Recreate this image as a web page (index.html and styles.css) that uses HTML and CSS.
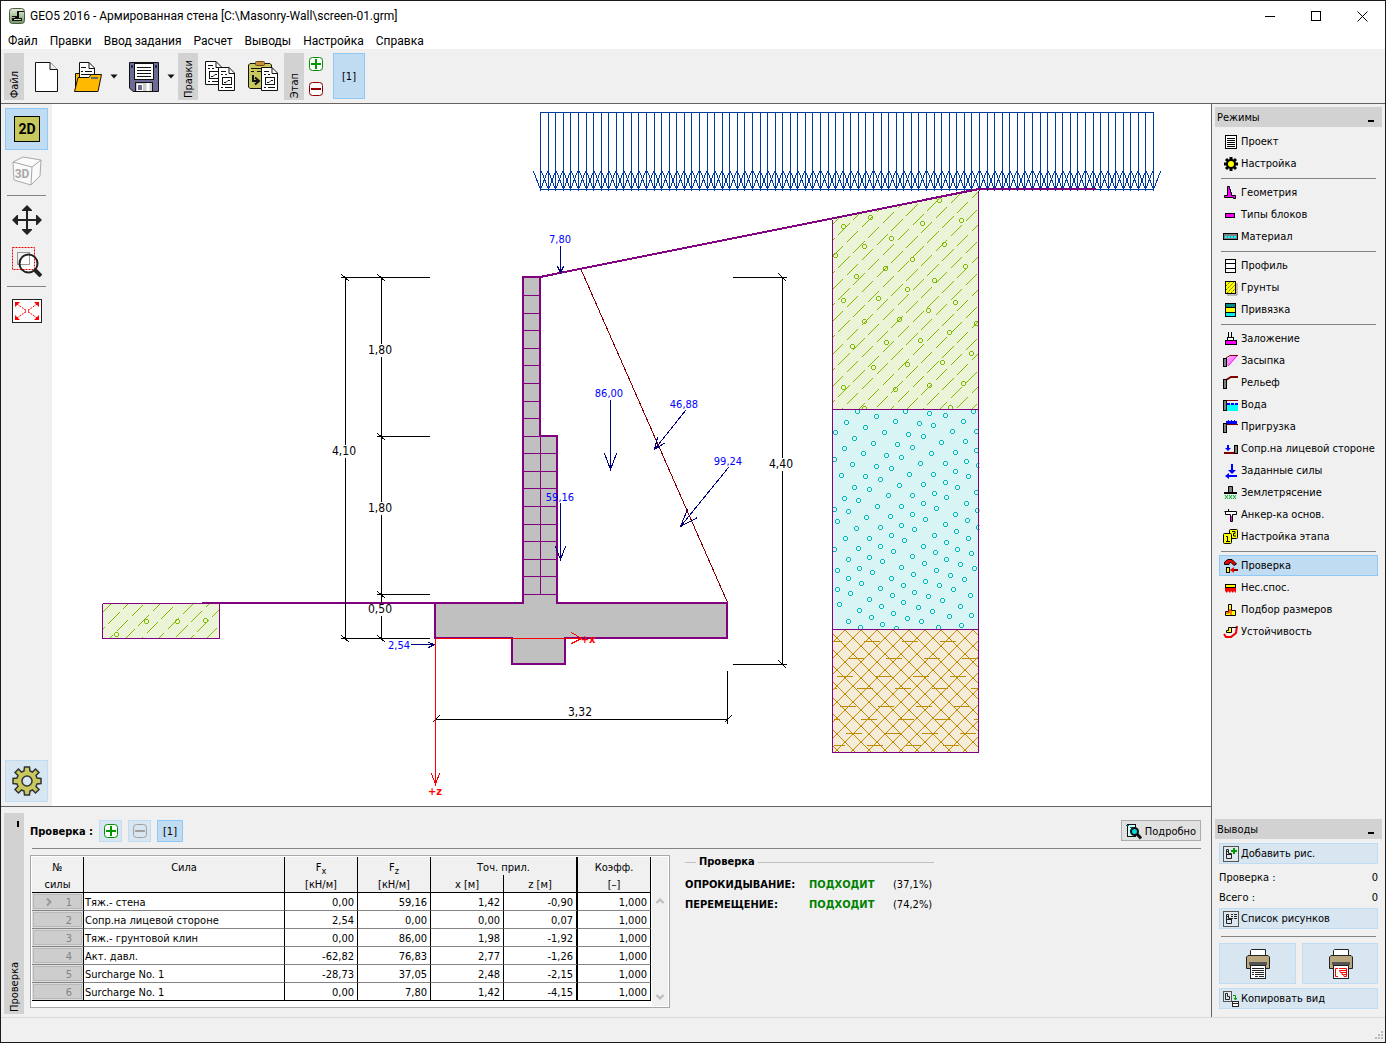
FILE: index.html
```html
<!DOCTYPE html>
<html lang="ru">
<head>
<meta charset="utf-8">
<title>GEO5 2016 - Армированная стена</title>
<link rel="stylesheet" href="styles.css">
</head>
<body>
<header class="titlebar">
  <svg class="app-icon" width="16" height="16" viewBox="0 0 16 16"><defs><linearGradient id="appfill" x1="0" y1="0" x2="0" y2="1"><stop offset="0" stop-color="#e4ecd8"/><stop offset="1" stop-color="#6f9a62"/></linearGradient></defs><rect x="0.5" y="0.5" width="15" height="15" rx="3" fill="url(#appfill)" stroke="#4d5a48"/><path d="M3 10H6V8H8V3H10V10H13V13H3Z" fill="#111"/><path d="M9 3.500H15M3 8.500H6" stroke="#111"/><path d="M5 11.500H12" stroke="#c9d8b8"/></svg>
  <h1 class="title">GEO5 2016 - Армированная стена [C:\Masonry-Wall\screen-01.grm]</h1>
  <div class="window-controls">
    <button class="win-btn" aria-label="Свернуть"><svg width="11" height="11"><path d="M0 5.500H10" stroke="#000"/></svg></button>
    <button class="win-btn" aria-label="Развернуть"><svg width="11" height="11"><rect x="0.5" y="0.5" width="9" height="9" fill="none" stroke="#000"/></svg></button>
    <button class="win-btn" aria-label="Закрыть"><svg width="11" height="11"><path d="M0.500 0.500L10.500 10.500M10.500 0.500L0.500 10.500" stroke="#000"/></svg></button>
  </div>
</header>
<nav class="menubar">
  <a href="#">Файл</a><a href="#">Правки</a><a href="#">Ввод задания</a><a href="#">Расчет</a><a href="#">Выводы</a><a href="#">Настройка</a><a href="#">Справка</a>
</nav>
<div class="toolbar">
  <div class="side-tab"><span>Файл</span></div>
  <button class="tool" aria-label="Новый"><svg width="24" height="30" viewBox="0 0 24 30"><path d="M1 0.500H15L22.500 8V29.500H0.500V0.500Z" fill="#fff" stroke="#111"/><path d="M15 0.500V7.500H22.500" fill="#eee" stroke="#111"/></svg></button>
  <button class="tool open" aria-label="Открыть"><svg width="28" height="30" viewBox="0 0 28 30"><path d="M1.500 28V11.500H8" fill="#ffb900" stroke="#111"/><path d="M5.500 20V0.500H15L20.500 6V20Z" fill="#fff" stroke="#111"/><path d="M15 0.500V6.500H20M7 5.500H12M7 9.500H9M11 9.500H18M7 12.500H18" fill="none" stroke="#111"/><path d="M0.500 29.500L4 15.500H15L17 12.500H27.500L24 29.500Z" fill="#ffb900" stroke="#111"/><path d="M17 16H24" stroke="#6b6b6b" stroke-width="2"/></svg></button>
  <button class="drop" aria-label="Последние файлы"><svg width="8" height="5"><path d="M0.500 0.500H7.500L4 4.500Z" fill="#111"/></svg></button>
  <button class="tool save" aria-label="Сохранить"><svg width="30" height="30" viewBox="0 0 30 30"><path d="M0.500 0.500H29.500V29.500H4L0.500 26Z" fill="#6b6b95" stroke="#111"/><rect x="5.500" y="1.500" width="19" height="16" fill="#fff" stroke="#111"/><path d="M8 5.500H22M8 8.500H22M8 11.500H22M8 14.500H22" stroke="#111"/><path d="M2 4.500H4M26 4.500H28" stroke="#111" stroke-width="2"/><rect x="6.500" y="20.500" width="17" height="9" fill="#ccc" stroke="#111"/><rect x="8.500" y="22.500" width="5" height="6" fill="#6b6b95" stroke="#fff"/><path d="M19 21V29" stroke="#fff" stroke-width="3"/></svg></button>
  <button class="drop" aria-label="Варианты сохранения"><svg width="8" height="5"><path d="M0.500 0.500H7.500L4 4.500Z" fill="#111"/></svg></button>
  <div class="side-tab"><span>Правки</span></div>
  <button class="tool copy" aria-label="Копировать"><svg width="31" height="31" viewBox="0 0 31 31"><defs><g id="sheet"><path d="M0.500 0.500H11L16.500 6V23.500H0.500Z" fill="#fff" stroke="#111"/><path d="M11 0.500V6.500H16M3 4.500H8M3 7.500H5M7 7.500H9M3 20.500H5M7 20.500H14" fill="none" stroke="#111"/><rect x="4.500" y="10.500" width="9" height="7" fill="#fff" stroke="#111"/><path d="M6 15.500H8L10 13.500H12" fill="none" stroke="#111"/></g></defs><use href="#sheet"/><use href="#sheet" x="13" y="6"/></svg></button>
  <button class="tool paste" aria-label="Вставить"><svg width="31" height="31" viewBox="0 0 31 31"><path d="M2 2.500H22L23.500 4V26L22 27.500H2L0.500 26V4Z" fill="#c8c85f" stroke="#111"/><rect x="7.500" y="0.500" width="9" height="4" rx="1" fill="#c98b3c" stroke="#6b4413"/><path d="M3 7.500H20M3 10.500H6M9 10.500H13" stroke="#111"/><path d="M5 14V20H10M7 16.500L11 20L7 23.500" fill="none" stroke="#111" stroke-width="2"/><use href="#sheet" x="13" y="6"/></svg></button>
  <div class="side-tab stage"><span>Этап</span></div>
  <div class="stage-buttons">
    <button class="mini" aria-label="Добавить этап"><svg width="14" height="14"><rect x="0.500" y="0.500" width="13" height="13" rx="3" fill="#fff" stroke="#008c00"/><path d="M2 7H12M7 2V12" stroke="#009600" stroke-width="2"/></svg></button>
    <button class="mini" aria-label="Удалить этап"><svg width="14" height="14"><rect x="0.500" y="0.500" width="13" height="13" rx="3" fill="#fff" stroke="#8c0000"/><path d="M2 7H12" stroke="#960000" stroke-width="2"/></svg></button>
  </div>
  <button class="stage-one">[1]</button>
</div>

<main class="workspace">
  <section class="left-area">
    <div class="view-row">
      <aside class="view-tools">
        <button class="vt active" aria-label="2D"><svg width="26" height="26"><rect x="0.500" y="0.500" width="25" height="25" fill="#c8c85f" stroke="#000"/><text class="t2d" x="13" y="18" text-anchor="middle">2D</text></svg></button>
        <button class="vt" aria-label="3D" disabled><svg width="30" height="30" viewBox="0 0 30 30"><path d="M1 6L11 1L29 4L28 20L19 29L2 24Z" fill="#fafafa" stroke="#a8a8a8"/><path d="M1 6L20 11L29 4M20 11L19 29" fill="none" stroke="#a8a8a8"/><text class="t3d" x="10" y="22" text-anchor="middle">3D</text></svg></button>
        <hr class="vsep">
        <button class="vt" aria-label="Сдвиг"><svg width="30" height="30" viewBox="0 0 30 30"><path d="M15 4V26M4 15H26" stroke="#222" stroke-width="2"/><path d="M15 0L20 5V6H10V5ZM15 30L20 25V24H10V25ZM0 15L5 10H6V20H5ZM30 15L25 10H24V20H25Z" fill="#222"/></svg></button>
        <button class="vt" aria-label="Увеличить область"><svg width="30" height="30" viewBox="0 0 30 30"><circle cx="16.500" cy="16.500" r="9" fill="#fff"/><rect x="5.500" y="5.500" width="12" height="12" fill="none" stroke="#999"/><rect x="0.500" y="0.500" width="22" height="22" fill="none" stroke="#e00" stroke-dasharray="2 1"/><circle cx="16.500" cy="16.500" r="9" fill="none" stroke="#222" stroke-width="2"/><path d="M23 23L29 29" stroke="#222" stroke-width="4"/></svg></button>
        <hr class="vsep">
        <button class="vt" aria-label="Показать всё"><svg width="30" height="24" viewBox="0 0 30 24"><rect x="0.500" y="0.500" width="29" height="23" fill="#fff" stroke="#222"/><path d="M5 5L12 10M25 5L18 10M5 19L12 14M25 19L18 14" stroke="#f00" stroke-dasharray="2 1"/><path d="M3 3H8L3 8ZM27 3H22L27 8ZM3 21H8L3 16ZM27 21H22L27 16Z" fill="#f00"/><path d="M13.500 10V14M16.500 10V14M12 10.500H14M16 10.500H18M12 13.500H14M16 13.500H18" stroke="#f44"/></svg></button>
        <button class="vt soft settings" aria-label="Настройки вида"><svg width="32" height="32" viewBox="-16 -16 32 32"><g fill="#c8c85f" stroke="#333" stroke-width="1.5"><path d="M-3 -10L-2.500 -14H2.500L3 -10L5.500 -9L8.500 -12L12 -8.500L9 -5.500L10 -3L14 -2.500V2.500L10 3L9 5.500L12 8.500L8.500 12L5.500 9L3 10L2.500 14H-2.500L-3 10L-5.500 9L-8.500 12L-12 8.500L-9 5.500L-10 3L-14 2.500V-2.500L-10 -3L-9 -5.500L-12 -8.500L-8.500 -12L-5.500 -9Z"/><circle r="5" fill="#d8e6f2"/></g></svg></button>
      </aside>
      <svg class="drawing" viewBox="52 104 1159 702" role="img" aria-label="Схема армированной стены">
        <defs>
          <marker id="ring-green" markerUnits="userSpaceOnUse" markerWidth="8" markerHeight="8" refX="4" refY="4" orient="0"><circle class="ring crisp" cx="4" cy="4" r="2" stroke="#80b900"/></marker>
          <marker id="ring-cyan" markerUnits="userSpaceOnUse" markerWidth="8" markerHeight="8" refX="4" refY="4" orient="0"><circle class="ring crisp" cx="4" cy="4" r="2" stroke="#00b9b9"/></marker>
          <marker id="load" markerUnits="userSpaceOnUse" markerWidth="20" markerHeight="90" refX="10" refY="80" orient="0"><path class="surcharge crisp" d="M10 2V80M3 62L10 80L17 62"/></marker>
          <clipPath id="soil0"><rect x="102" y="603" width="118" height="35"/></clipPath>
          <clipPath id="soil1"><path d="M832 219L979 190V409H832Z"/></clipPath>
          <clipPath id="soil2"><rect x="832" y="409" width="147" height="220"/></clipPath>
          <clipPath id="soil3"><rect x="832" y="629" width="147" height="123"/></clipPath>
        </defs>
        <g class="crisp">
          <path class="fill-clay" d="M832 219L979 190V409H832ZM102 603H220V638H102Z"/>
          <path class="fill-gravel" d="M832 409H979V629H832Z"/>
          <path class="fill-rock" d="M832 629H979V752H832Z"/>
          <g clip-path="url(#soil1)">
            <path class="hatch" d="M832 225l150 -150M832 257l150 -150M832 290l150 -150M832 322l150 -150M832 355l150 -150M832 387l150 -150M832 419l150 -150M832 452l150 -150M832 484l150 -150M832 517l150 -150M832 549l150 -150"/>
            <path class="hatch shifted" d="M832 241l150 -150M832 274l150 -150M832 306l150 -150M832 338l150 -150M832 371l150 -150M832 403l150 -150M832 436l150 -150M832 468l150 -150M832 500l150 -150M832 533l150 -150"/>
          </g>
          <g clip-path="url(#soil0)">
            <path class="hatch" d="M102 613l150 -150M102 646l150 -150M102 678l150 -150M102 711l150 -150M102 743l150 -150"/>
            <path class="hatch shifted" d="M102 630l150 -150M102 662l150 -150M102 695l150 -150M102 727l150 -150"/>
          </g>
          <g clip-path="url(#soil3)">
            <path class="brown" d="M832 489l147 147M832 505l147 147M832 521l147 147M832 537l147 147M832 553l147 147M832 569l147 147M832 585l147 147M832 601l147 147M832 617l147 147M832 633l147 147M832 649l147 147M832 665l147 147M832 681l147 147M832 697l147 147M832 713l147 147M832 729l147 147M832 745l147 147"/>
            <path class="brown" d="M832 643l147 -147M832 659l147 -147M832 675l147 -147M832 691l147 -147M832 707l147 -147M832 723l147 -147M832 739l147 -147M832 755l147 -147M832 771l147 -147M832 787l147 -147M832 803l147 -147M832 819l147 -147M832 835l147 -147M832 851l147 -147M832 867l147 -147M832 883l147 -147"/>
          </g>
        </g>
        <g transform="translate(.5 .5)">
          <polyline class="dots green" clip-path="url(#soil1)" points="843,226 870,217 939,200 922,223 961,220 891,238 864,246 944,244 835,255 912,259 965,266 885,268 856,276 934,280 907,289 878,298 843,300 955,302 928,310 899,319 864,321 976,323 949,332 920,340 886,342 852,346 971,353 942,362 907,364 873,367 843,387 963,383 929,385 895,389 950,407 864,408"/>
          <polyline class="dots green" points="116,634 146,621 177,621 205,620"/>
          <polyline class="dots cyan" clip-path="url(#soil2)" points="857,411 876,416 905,411 929,413 945,415 973,411 846,422 895,421 919,423 933,425 963,421 865,427 835,432 884,432 908,434 952,431 976,431 923,436 854,438 873,443 897,444 912,447 941,442 965,441 844,448 863,453 886,455 931,453 955,452 976,450 901,457 834,459 852,464 920,463 945,463 966,461 876,466 891,468 841,475 865,476 880,479 909,474 933,474 955,471 968,476 978,465 854,487 869,489 899,485 923,484 945,482 957,487 888,495 912,495 934,493 946,497 976,492 844,498 858,500 834,509 848,511 877,506 901,506 923,503 936,508 966,503 866,517 890,516 912,514 925,519 955,514 977,510 837,521 856,528 880,527 901,525 914,529 945,524 967,520 956,531 845,538 869,538 891,535 904,540 934,535 946,542 968,538 978,527 858,548 880,546 893,551 923,546 935,552 957,549 834,549 971,553 848,559 869,557 882,561 912,556 924,563 946,559 960,564 837,570 859,568 872,572 901,567 913,574 936,570 950,575 974,568 848,578 861,583 891,578 903,585 925,581 939,585 964,579 837,589 850,593 880,588 892,595 914,592 928,596 953,589 970,595 839,604 869,599 881,606 903,602 918,607 942,600 960,606 859,610 871,617 893,613 907,618 932,611 949,616 971,615 848,621 882,624 921,621 961,625 860,627 896,628 938,627"/>
          <g class="crisp">
            <path class="brown" d="M833 641h8M863 641h16M901 641h16M939 641h16M847 658h16M885 658h16M923 658h16M961 658h16M836 676h16M874 676h16M912 676h16M949 676h16M833 688h3M856 688h16M894 688h16M931 688h16M970 688h8M839 706h16M877 706h16M915 706h16M953 706h16M833 719h6M860 719h16M897 719h16M934 719h16M973 719h5M845 733h16M883 733h16M921 733h16M959 733h16M833 745h11M866 745h16M904 745h16M942 745h16"/>
            <path class="purple" d="M832 219V752H978V190M832 409H978M832 629H978M102 603V638H219V603"/>
            <path class="surcharge" d="M540 112H1153M540 189H1153"/>
          </g>
          <polyline class="loads" points="540,189 548,189 555,189 563,189 570,189 578,189 586,189 593,189 601,189 608,189 616,189 623,189 631,189 638,189 646,189 654,189 661,189 669,189 676,189 684,189 691,189 699,189 707,189 714,189 722,189 729,189 737,189 744,189 752,189 760,189 767,189 775,189 782,189 790,189 797,189 805,189 812,189 820,189 828,189 835,189 843,189 850,189 858,189 865,189 873,189 881,189 888,189 896,189 903,189 911,189 918,189 926,189 934,189 941,189 949,189 956,189 964,189 971,189 979,189 987,189 994,189 1002,189 1009,189 1017,189 1024,189 1032,189 1040,189 1047,189 1055,189 1062,189 1070,189 1077,189 1085,189 1093,189 1100,189 1108,189 1115,189 1123,189 1130,189 1138,189 1145,189 1153,189"/>
        </g>
        <g class="crisp">
          <path class="wall" d="M523 277H540V436H557V603H727V638H565V664H512V638H435V603H523Z"/>
          <path class="ground" d="M202 603H435M540 277L979 189L982 188.500H1096"/>
        </g>
        <g class="crisp" transform="translate(.5 .5)">
          <path class="purple" d="M102 603H202M523 295H540M523 313H540M523 330H540M523 348H540M523 365H540M523 383H540M523 401H540M523 418H540M523 436H540M523 453H557M523 471H557M523 488H557M523 506H557M523 524H557M523 541H557M523 559H557M523 576H557M523 594H557M540 436V594"/>
          <path class="slip" d="M581 270L727 602"/>
          <path class="dim" d="M345 277V444M345 457V638M381 277V343M381 356V501M381 514V602M381 615V638M340 277H429M376 436H429M376 594H429M340 638H429M782 277V457M782 470V664M732 277H786M732 664H786M435 719H727M727 670V723M341 274L349 281M377 274L385 281M377 433L385 440M377 591L385 598M341 635L349 642M377 635L385 642M778 273L786 281M778 660L786 668M432 722L439 715M724 722L731 715"/>
          <path class="force" d="M560 245V272M557 266L560 272L563 266M610 399V469M604 453L610 469L616 453M560 502V559M555 546L560 559L565 546M685 410L654 449M657 437L654 449L665 442M728 467L680 526M687 509L680 526L697 517M410 644H434M428 642L434 644L428 647"/>
          <path class="axis" d="M435 638V784M431 773L435 784L439 773M435 638H581M571 632L581 638L571 643"/>
        </g>
        <g class="dim-text">
          <text x="380" y="354">1,80</text><text x="344" y="455">4,10</text><text x="380" y="512">1,80</text><text x="380" y="613">0,50</text><text x="781" y="468">4,40</text><text x="580" y="716">3,32</text>
        </g>
        <g class="force-text">
          <text x="560" y="243">7,80</text><text x="609" y="397">86,00</text><text x="684" y="408">46,88</text><text x="728" y="465">99,24</text><text x="560" y="501">59,16</text><text x="399" y="649">2,54</text>
        </g>
        <g class="axis-text"><text x="588" y="643">+x</text><text x="435" y="795">+z</text></g>
      </svg>
    </div>

    <section class="results">
      <div class="side-tab tall"><i class="pin"></i><span>Проверка</span></div>
      <div class="results-main">
        <div class="results-head">
          <strong>Проверка :</strong>
          <button class="soft-btn sq" aria-label="Добавить"><svg width="14" height="14"><rect x="0.500" y="0.500" width="13" height="13" rx="3" fill="#fff" stroke="#008c00"/><path d="M2 7H12M7 2V12" stroke="#009600" stroke-width="2"/></svg></button>
          <button class="soft-btn sq" aria-label="Удалить" disabled><svg width="14" height="14"><rect x="0.500" y="0.500" width="13" height="13" rx="3" fill="none" stroke="#a0a0a0"/><path d="M2 7H12" stroke="#a0a0a0" stroke-width="2"/></svg></button>
          <button class="soft-btn on">[1]</button>
          <button class="details"><svg width="16" height="16" viewBox="0 0 16 16"><rect x="1.500" y="0.500" width="8" height="12" fill="#cff" stroke="#111"/><path d="M0 1.500H3M4 3.500H8M4 6.500H8" stroke="#066"/><circle cx="8.500" cy="7.500" r="3.500" fill="#0dd" stroke="#111" stroke-width="2"/><path d="M11 10L15 14.500" stroke="#111" stroke-width="3"/></svg>Подробно</button>
        </div>
        <div class="results-body">
          <div class="grid-frame">
            <table class="forces">
              <colgroup><col class="c-no"><col class="c-name"><col class="c-num"><col class="c-num"><col class="c-num"><col class="c-z"><col class="c-num"></colgroup>
              <thead>
                <tr><th>№</th><th>Сила</th><th>F<sub>x</sub></th><th>F<sub>z</sub></th><th colspan="2" class="thick">Точ. прил.</th><th>Коэфф.</th></tr>
                <tr><th>силы</th><th></th><th>[кН/м]</th><th>[кН/м]</th><th>x [м]</th><th class="thick">z [м]</th><th>[–]</th></tr>
              </thead>
              <tbody>
                <tr><th><svg class="cur" width="6" height="8"><path d="M1 0.500L4.500 4L1 7.500" fill="none" stroke="#999" stroke-width="2"/></svg>1</th><td>Тяж.- стена</td><td>0,00</td><td>59,16</td><td>1,42</td><td class="thick">-0,90</td><td>1,000</td></tr>
                <tr><th>2</th><td>Сопр.на лицевой стороне</td><td>2,54</td><td>0,00</td><td>0,00</td><td class="thick">0,07</td><td>1,000</td></tr>
                <tr><th>3</th><td>Тяж.- грунтовой клин</td><td>0,00</td><td>86,00</td><td>1,98</td><td class="thick">-1,92</td><td>1,000</td></tr>
                <tr><th>4</th><td>Акт. давл.</td><td>-62,82</td><td>76,83</td><td>2,77</td><td class="thick">-1,26</td><td>1,000</td></tr>
                <tr><th>5</th><td>Surcharge No. 1</td><td>-28,73</td><td>37,05</td><td>2,48</td><td class="thick">-2,15</td><td>1,000</td></tr>
                <tr><th>6</th><td>Surcharge No. 1</td><td>0,00</td><td>7,80</td><td>1,42</td><td class="thick">-4,15</td><td>1,000</td></tr>
              </tbody>
            </table>
            <div class="scroll"><svg width="8" height="6"><path d="M0.500 5L4 1.500L7.500 5" fill="none" stroke="#bbb" stroke-width="2"/></svg><svg width="8" height="6"><path d="M0.500 1L4 4.500L7.500 1" fill="none" stroke="#bbb" stroke-width="2"/></svg></div>
          </div>
          <section class="verdict">
            <h2><span>Проверка</span></h2>
            <dl>
              <dt>ОПРОКИДЫВАНИЕ:</dt><dd class="ok">ПОДХОДИТ</dd><dd>(37,1%)</dd>
              <dt>ПЕРЕМЕЩЕНИЕ:</dt><dd class="ok">ПОДХОДИТ</dd><dd>(74,2%)</dd>
            </dl>
          </section>
        </div>
      </div>
    </section>
  </section>

  <aside class="modes">
    <div class="panel-head">Режимы<i></i></div>
    <nav class="mode-list">
      <button class="mode"><svg viewBox="0 0 16 16"><rect x="2.500" y="1.500" width="11" height="13" fill="#fff" stroke="#000"/><path d="M4 4.500H12M4 6.500H12M4 8.500H12M4 10.500H12M4 12.500H12" stroke="#000"/></svg>Проект</button>
      <button class="mode"><svg viewBox="-8 -8 16 16"><path d="M0 -7V7M-7 0H7M-5 -5L5 5M5 -5L-5 5" stroke="#000" stroke-width="3"/><circle r="4" fill="#ff0" stroke="#000" stroke-width="2"/></svg>Настройка</button>
      <hr>
      <button class="mode"><svg viewBox="0 0 16 16"><path d="M1.500 10.500H4.500V1.500H6.500V4.500H7.500V7.500H8.500V10.500H12.500V13.500H10.500V12.500H1.500Z" fill="#f0f" stroke="#000"/></svg>Геометрия</button>
      <button class="mode"><svg viewBox="0 0 16 16"><rect x="2.500" y="6.500" width="9" height="4" fill="#f0f" stroke="#000"/></svg>Типы блоков</button>
      <button class="mode"><svg viewBox="0 0 16 16"><rect x="0.500" y="4.500" width="14" height="6" fill="#808080" stroke="#000"/><path d="M2 8H13" stroke="#0ff" stroke-width="2" stroke-dasharray="2 1"/></svg>Материал</button>
      <hr>
      <button class="mode"><svg viewBox="0 0 16 16"><rect x="2.500" y="1.500" width="10" height="13" fill="#fff" stroke="#000"/><path d="M2 5.500H13M2 10.500H13" stroke="#000"/></svg>Профиль</button>
      <button class="mode"><svg viewBox="0 0 16 16"><path d="M4 15H14V3" fill="none" stroke="#888"/><rect x="2.500" y="1.500" width="10" height="12" fill="#ff0" stroke="#000"/><path d="M3 6L7 2M3 10L11 2M4 13L12 5M8 13L12 9" stroke="#660" stroke-dasharray="2 1"/></svg>Грунты</button>
      <button class="mode"><svg viewBox="0 0 16 16"><rect x="2.500" y="1.500" width="10" height="4" fill="#088" stroke="#000"/><rect x="2.500" y="5.500" width="10" height="5" fill="#ff0" stroke="#000"/><rect x="2.500" y="10.500" width="10" height="4" fill="#0ee" stroke="#000"/></svg>Привязка</button>
      <hr>
      <button class="mode"><svg viewBox="0 0 16 16"><path d="M5.500 1V6M8.500 1V6" stroke="#000"/><rect x="4.500" y="6.500" width="6" height="3" fill="#fff" stroke="#000"/><rect x="2.500" y="9.500" width="11" height="4" fill="#f0f" stroke="#000"/></svg>Заложение</button>
      <button class="mode"><svg viewBox="0 0 16 16"><path d="M4 13V6L9 2H15L5 13Z" fill="#f8f"/><path d="M3 5L7 2.500H15" fill="none" stroke="#800000"/><path d="M14 3L5 13" stroke="#f0f"/><rect x="0.500" y="5.500" width="3" height="8" fill="#808080" stroke="#000"/></svg>Засыпка</button>
      <button class="mode"><svg viewBox="0 0 16 16"><path d="M3 5L8 2H15" fill="none" stroke="#800000" stroke-width="2"/><rect x="0.500" y="4.500" width="3" height="9" fill="#808080" stroke="#000"/></svg>Рельеф</button>
      <button class="mode"><svg viewBox="0 0 16 16"><path d="M4 3.500H15" stroke="#800000"/><rect x="4" y="7" width="11" height="7" fill="#0ff"/><path d="M4 7H15" stroke="#00f" stroke-width="2" stroke-dasharray="3 1"/><rect x="0.500" y="3.500" width="3" height="10" fill="#808080" stroke="#000"/></svg>Вода</button>
      <button class="mode"><svg viewBox="0 0 16 16"><path d="M3 2H5V1H6V2H8V1H9V2H11V1H12V2H14V5H3Z" fill="#00f"/><path d="M4 5.500H15" stroke="#800000"/><rect x="0.500" y="4.500" width="3" height="9" fill="#808080" stroke="#000"/></svg>Пригрузка</button>
      <button class="mode"><svg viewBox="0 0 16 16"><path d="M5 4V8" stroke="#00f" stroke-width="2"/><path d="M2 7H8L5 10Z" fill="#00f"/><path d="M1 12H11" stroke="#800000" stroke-width="2"/><rect x="11.500" y="4.500" width="3" height="8" fill="#808080" stroke="#000"/></svg>Сопр.на лицевой стороне</button>
      <button class="mode"><svg viewBox="0 0 16 16"><path d="M9 1V10M4 13H14" stroke="#00f" stroke-width="2"/><path d="M5 7H13L9 11ZM2 13L6 10V16Z" fill="#00f"/></svg>Заданные силы</button>
      <button class="mode"><svg viewBox="0 0 16 16"><path d="M5.500 1.500H9.500V7.500H5.500Z" fill="#808080" stroke="#000"/><path d="M1 8H14" stroke="#000" stroke-width="2"/><path d="M2 10L5 14M5 10L2 14M6 10L9 14M9 10L6 14M10 10L13 14M13 10L10 14" stroke="#00b428"/></svg>Землетрясение</button>
      <button class="mode"><svg viewBox="0 0 16 16"><path d="M1.500 4.500H5.500V2M5.500 4.500H13.500V7.500H9.500V14.500H7.500V7.500H2.500V4.500" fill="#fff" stroke="#000"/><path d="M8.500 9V14" stroke="#f0f"/></svg>Анкер-ка основ.</button>
      <button class="mode"><svg viewBox="0 0 16 16"><rect x="6.500" y="0.500" width="8" height="9" rx="1" fill="#ff0" stroke="#000"/><rect x="0.500" y="4.500" width="8" height="10" rx="1" fill="#ff0" stroke="#000"/><path d="M3 7.500H4.500V12M3 12.500H7M9 2.500H12V4.500H10.500V7H13" fill="none" stroke="#000"/></svg>Настройка этапа</button>
      <hr>
      <button class="mode selected"><svg viewBox="0 0 16 16"><path d="M1.500 6.500V4L5 1.500H9L13.500 6L11 7.500L8 4.500H6.500L6 6.500Z" fill="#e00" stroke="#000"/><rect x="3.500" y="9.500" width="3" height="5" fill="#ff0" stroke="#000"/><path d="M8 12H15" stroke="#800000" stroke-width="2"/><path d="M7 12L11 9V15Z" fill="#e00"/></svg>Проверка</button>
      <button class="mode"><svg viewBox="0 0 16 16"><rect x="2.500" y="4.500" width="10" height="3" fill="#ff0" stroke="#000"/><path d="M2 8H13V13L11 11L10 13L8 11L7 13L5 11L4 13L2 11Z" fill="#f00"/></svg>Нес.спос.</button>
      <button class="mode"><svg viewBox="0 0 16 16"><path d="M5.500 2.500H8.500V8.500H12.500V13.500H2.500V9.500H5.500Z" fill="#ff0" stroke="#000"/><path d="M3 11H6V8H8V13" fill="none" stroke="#f00"/></svg>Подбор размеров</button>
      <button class="mode"><svg viewBox="0 0 16 16"><path d="M14 2L13 9L8 13H3L1 10" fill="none" stroke="#e00" stroke-width="2"/><path d="M5.500 3.500H8.500V8.500H3.500V6.500H5.500ZM9 3.500H14" fill="#ff0" stroke="#000"/></svg>Устойчивость</button>
    </nav>
    <div class="panel-head outputs-head">Выводы<i></i></div>
    <div class="outputs">
      <button class="out"><svg viewBox="0 0 16 16"><rect x="0.500" y="0.500" width="15" height="15" fill="#dfe8ef" stroke="#555"/><path d="M3.500 3.500H5.500V7.500H8.500V12.500H3.500ZM4 8.500H8M4 5.500H5" fill="none" stroke="#222"/><path d="M11 2V8M8 5H14" stroke="#009600" stroke-width="2"/></svg>Добавить рис.</button>
      <div class="stats">
        <p class="stat"><span>Проверка :</span><span>0</span></p>
        <p class="stat"><span>Всего :</span><span>0</span></p>
      </div>
      <button class="out"><svg viewBox="0 0 16 16"><rect x="0.500" y="0.500" width="15" height="15" fill="#dfe8ef" stroke="#555"/><path d="M3.500 3.500H5.500V7.500H8.500V12.500H3.500ZM4 8.500H8M4 5.500H5" fill="none" stroke="#222"/><path d="M8 3.500H10M11 3.500H14M8 5.500H10M11 5.500H14M8 7.500H10M11 7.500H14" stroke="#222"/></svg>Список рисунков</button>
      <hr>
      <div class="printers">
        <button class="print" aria-label="Печать протокола"><svg width="26" height="30" viewBox="0 0 26 30"><path d="M5.500 8V1.500L6.500 0.500H20.500V8" fill="#fff" stroke="#222"/><path d="M3 6.500H23L24.500 8V19.500H1.500V8Z" fill="#b9a67c" stroke="#222"/><rect x="4" y="13" width="18" height="3" fill="#555"/><rect x="5.500" y="16.500" width="15" height="13" fill="#fff" stroke="#222"/><path d="M7 19.500H19M7 21.500H19M7 23.500H9M10 23.500H19M7 25.500H9M10 25.500H19M10 27.500H13M14 27.500H19" stroke="#222"/></svg></button>
        <button class="print" aria-label="Печать рисунка"><svg width="26" height="30" viewBox="0 0 26 30"><path d="M5.500 8V1.500L6.500 0.500H20.500V8" fill="#fff" stroke="#222"/><path d="M3 6.500H23L24.500 8V19.500H1.500V8Z" fill="#b9a67c" stroke="#222"/><rect x="4" y="13" width="18" height="3" fill="#555"/><rect x="5.500" y="16.500" width="15" height="13" fill="#fff" stroke="#222"/><path d="M10 19.500H7.500V27.500H10M11 19.500H18.500V27.500H16L15.500 25.500H14V23.500H12.500L11.500 21.500H18M13 23.500H18M16 25.500H18" fill="none" stroke="#f00"/></svg></button>
      </div>
      <button class="out"><svg viewBox="0 0 16 16"><rect x="0.500" y="0.500" width="8" height="10" fill="#dfe8ef" stroke="#555"/><path d="M2.500 2.500H4.500V5.500H6.500V8.500H2.500Z" fill="none" stroke="#222"/><path d="M10 4.500H12.500V8M11 7L12.500 9L14 7" fill="none" stroke="#009600"/><rect x="9.500" y="10.500" width="6" height="5" fill="#fff" stroke="#222"/><path d="M9 12.500H16" stroke="#222"/></svg>Копировать вид</button>
    </div>
  </aside>
</main>
<footer class="statusbar"><svg width="10" height="10"><path d="M7 1H9M4 4H6M7 4H9M1 7H3M4 7H6M7 7H9" stroke="#bbb" stroke-width="2"/></svg></footer>
</body>
</html>
```
FILE: styles.css
```css
* { box-sizing: border-box; }
html { height: 100%; }
body {
  margin: 0;
  min-height: 100%;
  display: flex;
  flex-direction: column;
  border: 1px solid #1a1a1a;
  background: #f0f0f0;
  color: #000;
  font: 11px/14px "DejaVu Sans Condensed", "Noto Sans", sans-serif;
}
button { font: inherit; color: inherit; padding: 0; margin: 0; border: 0; background: none; display: flex; align-items: center; justify-content: center; }
svg { display: block; flex: none; }
hr { border: 0; height: 1px; background: #848484; margin: 0; }
p, h1, h2, dl, dd { margin: 0; }

.titlebar { display: flex; align-items: center; height: 30px; padding-left: 8px; background: #fff; }
.title { flex: 1; margin-left: 5px; font: 12px/16px Roboto, sans-serif; }
.window-controls { display: flex; }
.win-btn { width: 46px; height: 30px; }
.menubar { display: flex; gap: 12px; height: 18px; padding-left: 7px; background: #fff; font: 12px/20px Roboto, sans-serif; }
.menubar a { color: #000; text-decoration: none; }

.toolbar { display: flex; align-items: flex-start; height: 55px; padding: 4px 3px 0; border-bottom: 1px solid #646464; }
.side-tab { display: flex; align-items: flex-end; justify-content: center; width: 20px; height: 47px; padding: 0 0 2px 1px; background: #d2d2d2; }
.side-tab span { writing-mode: vertical-rl; transform: rotate(180deg); line-height: 16px; }
.tool { height: 47px; margin-left: 11px; }
.open { margin-left: 15px; }
.drop { width: 19px; height: 47px; padding-right: 3px; justify-content: flex-end; }
.save { margin-left: 8px; }
.copy { margin-left: 7px; }
.paste { margin-left: 12px; }
.stage { margin-left: 5px; }
.stage-buttons { display: flex; flex-direction: column; gap: 11px; padding: 4px 0 0 5px; }
.stage-one { width: 32px; height: 46px; margin-left: 10px; padding-top: 2px; border: 1px solid #90c8f6; background: #c0dcf3; }

.workspace { flex: 1; display: flex; }
.left-area { flex: 1; min-width: 0; display: flex; flex-direction: column; border-right: 1px solid #646464; }
.view-row { flex: 1; display: flex; min-height: 0; }
.view-tools { width: 51px; padding: 4px; display: flex; flex-direction: column; }
.vt { width: 43px; height: 42px; border: 1px solid transparent; }
.active { border-color: #90c8f6; background: #c0dcf3; }
.soft { border-color: #c0dcf3; background: #d8e6f2; }
.settings { margin-top: auto; }
.vsep { margin: 3px 2px; }
.t2d { font: bold 14px Roboto, sans-serif; }
.t3d { font: bold 12px Roboto, sans-serif; fill: #a8a8a8; }

.drawing { flex: 1; min-width: 0; background: #fff; }
.crisp { shape-rendering: crispEdges; }
.fill-clay { fill: #ecf4d8; }
.fill-gravel { fill: #d8f4f4; }
.fill-rock { fill: #f4ecd8; }
.dots, .loads { fill: none; stroke: none; }
.green { marker: url(#ring-green); }
.cyan { marker: url(#ring-cyan); }
.loads { marker: url(#load); }
.ring, .hatch, .brown, .purple, .surcharge, .ground, .slip, .dim, .force, .axis { fill: none; }
.hatch { stroke: #80b900; stroke-dasharray: 16 5; }
.shifted { stroke-dashoffset: 12; }
.brown { stroke: #bf8c00; }
.purple { stroke: #800080; }
.surcharge { stroke: #003ca0; }
.wall { fill: #c0c0c0; stroke: #800080; stroke-width: 2; }
.ground { stroke: #800080; stroke-width: 2; }
.slip { stroke: #800000; }
.dim { stroke: #000; }
.force { stroke: #000080; }
.axis { stroke: #f00; }
.dim-text, .force-text, .axis-text { text-anchor: middle; }
.dim-text { font-size: 12px; }
.force-text { fill: #00f; }
.axis-text { fill: #f00; font-weight: bold; }

.results { display: flex; height: 211px; padding: 6px 10px 0 3px; border-top: 1px solid #646464; }
.tall { height: 201px; flex-direction: column; align-items: center; justify-content: space-between; padding-top: 8px; }
.pin { width: 2px; height: 6px; margin-left: 6px; background: #000; }
.results-main { flex: 1; min-width: 0; margin-left: 6px; }
.results-head { display: flex; align-items: center; height: 36px; margin-left: 2px; border-bottom: 1px solid #848484; }
.results-head strong { width: 69px; margin-left: -2px; padding-top: 2px; }
.soft-btn { height: 22px; border: 1px solid #c0dcf3; background: #d8e6f2; margin-right: 6px; }
.sq { width: 23px; }
.on { width: 26px; padding-top: 2px; border-color: #90c8f6; background: #c0dcf3; }
.details { width: 80px; height: 21px; gap: 3px; margin-left: auto; padding-top: 2px; border: 1px solid #adadad; background: #e1e1e1; }
.results-body { display: flex; margin-top: 6px; }
.grid-frame { display: flex; justify-content: space-between; width: 640px; height: 153px; padding: 1px; border: 1px solid #a8a8a8; background: #fff; }
.forces { width: 619px; height: 144px; table-layout: fixed; border-collapse: separate; border-spacing: 0; }
.c-no { width: 52px; }
.c-name { width: 201px; }
.c-num { width: 73px; }
.c-z { width: 74px; }
.forces th, .forces td { height: 18px; padding: 2px 0 0; line-height: 15px; border-right: 1px solid #000; font-weight: normal; }
.forces thead th { background: #f0f0f0; text-align: center; }
.forces thead tr + tr th { border-bottom: 1px solid #000; }
.forces sub { font-size: 9px; line-height: 0; }
.forces .thick { border-right-width: 2px; }
.forces td { padding-right: 3px; text-align: right; border-bottom: 1px solid #848484; }
.forces td:nth-child(2) { padding-left: 1px; text-align: left; }
.forces tbody th { padding-right: 11px; text-align: right; color: #848484; background: #cdcdcd; border-bottom: 1px solid #848484; box-shadow: inset 0 0 0 1px #dcdcdc, inset 0 0 0 2px #b8b8b8; }
.forces tbody tr:last-child > * { border-bottom-color: #000; }
.cur { display: inline-block; margin-right: 14px; }
.scroll { width: 16px; display: flex; flex-direction: column; align-items: center; justify-content: space-between; padding: 41px 0 6px; background: #f0f0f0; }
.verdict { width: 249px; margin-left: 15px; }
.verdict h2 { display: flex; align-items: center; gap: 3px; font-size: 11px; line-height: 14px; }
.verdict h2::before { content: ""; width: 11px; height: 1px; background: #c0c0c0; }
.verdict h2::after { content: ""; flex: 1; height: 1px; background: #c0c0c0; }
.verdict dl { display: grid; grid-template-columns: 124px 84px 1fr; margin-top: 6px; line-height: 20px; }
.verdict dt { font-weight: bold; }
.ok { font-weight: bold; color: #008000; }

.modes { width: 173px; padding: 3px 3px 8px; display: flex; flex-direction: column; }
.panel-head { display: flex; justify-content: space-between; height: 20px; padding: 0 8px 0 2px; line-height: 22px; background: #d2d2d2; }
.panel-head i { width: 6px; height: 2px; margin-top: 13px; background: #000; }
.mode-list { padding: 4px; }
.mode-list hr { margin: 4px 2px 3px; }
.mode, .out { width: 100%; height: 21px; padding: 1px 0 0 3px; gap: 2px; justify-content: flex-start; white-space: nowrap; line-height: 16px; border: 1px solid transparent; }
.mode { margin-bottom: 1px; }
.mode svg, .out svg { width: 16px; height: 16px; }
.selected { border-color: #90c8f6; background: #c0dcf3; }
.outputs-head { margin-top: auto; }
.outputs { padding: 4px 4px 0; }
.out { border-color: #c0dcf3; background: #d8e6f2; }
.stats { margin-top: 4px; }
.stat { display: flex; justify-content: space-between; line-height: 20px; }
.outputs hr { margin: 7px 2px 0; }
.printers { display: flex; gap: 6px; margin: 6px 0 4px; }
.print { flex: 1; height: 41px; padding-left: 2px; border: 1px solid #c0dcf3; background: #d8e6f2; }

.statusbar { display: flex; align-items: flex-end; justify-content: flex-end; height: 25px; padding: 0 1px 1px; border-top: 1px solid #d9d9d9; }
```
